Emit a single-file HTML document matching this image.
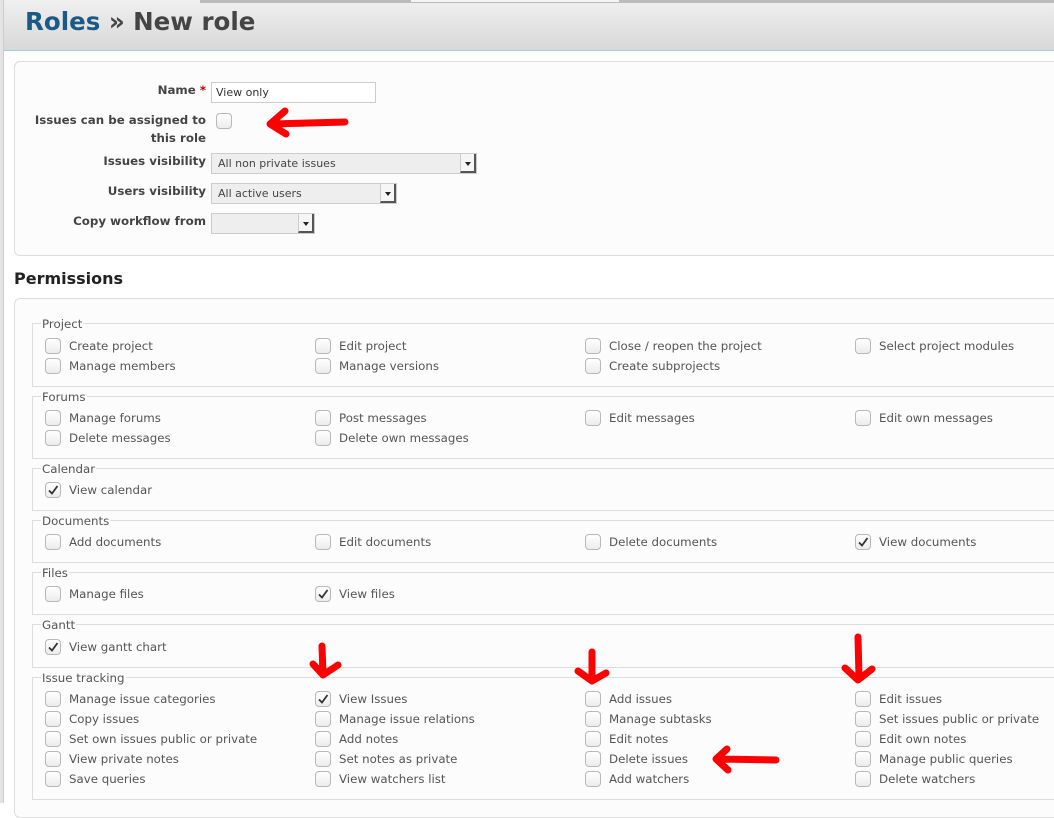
<!DOCTYPE html><html><head><style>
*{box-sizing:border-box}
body{margin:0;width:1054px;height:803px;overflow:hidden;background:#fff;font-family:"DejaVu Sans","Liberation Sans",sans-serif;font-size:11.8px;color:#555;position:relative}
.a{position:absolute;white-space:nowrap}
.cb{position:absolute;width:16px;height:16px;border:1px solid #b8b8b8;border-radius:4px;background:linear-gradient(#fff,#ececec)}
.lab{font-weight:bold;color:#444;text-align:right;width:200px}
.fs{position:absolute;left:32px;width:1040px;border:1px solid #ddd;border-right:none}
.lg{position:absolute;left:41px;background:#fcfcfc;padding:0 1px;color:#555}
.sel{position:absolute;height:21px;border:1px solid #ccc;background:#eee;font-size:11px;padding:3px 6px;color:#444}
.sel i{position:absolute;right:0;top:0;width:16px;height:19px;background:#f6f6f6;border-left:1px solid #ccc;border-right:2px solid #555;border-bottom:2px solid #555}
.sel i:after{content:"";position:absolute;left:4px;top:8px;border:3px solid transparent;border-top:4px solid #222}
</style></head><body>
<div class="a" style="left:0;top:0;width:4px;height:803px;background:#e4e4e4;border-right:1px solid #ccc"></div>
<div class="a" style="left:4px;top:0;width:1050px;height:51px;background:linear-gradient(#f0f0f0,#d8d8d8);border-bottom:1px solid #a9cbe0"></div>
<div class="a" style="left:200px;top:0;width:210px;height:3px;background:#bbb"></div>
<div class="a" style="left:410px;top:0;width:210px;height:3px;background:#f4f4f4;border:1px solid #bbb;border-top:none"></div>
<div class="a" style="left:620px;top:0;width:434px;height:3px;background:#bbb"></div>
<div class="a" style="left:25px;top:7px;font-size:24.5px;font-weight:bold;color:#444"><span style="color:#1b5a85">Roles</span> » New role</div>

<div class="a" style="left:14px;top:61px;width:1050px;height:195px;border:1px solid #ddd;border-radius:6px;background:#fcfcfc"></div>
<div class="a lab" style="left:6px;top:83px">Name <span style="color:#b00">*</span></div>
<div class="a" style="left:211px;top:82px;width:165px;height:21px;border:1px solid #ccc;background:#fff;font-size:11px;padding:3px 4px;color:#333">View only</div>
<div class="a lab" style="left:6px;top:111px;line-height:18px">Issues can be assigned to<br>this role</div>
<div class="cb" style="left:216px;top:113px"></div>
<div class="a lab" style="left:6px;top:154px">Issues visibility</div>
<div class="sel" style="left:211px;top:153px;width:266px">All non private issues<i></i></div>
<div class="a lab" style="left:6px;top:184px">Users visibility</div>
<div class="sel" style="left:211px;top:183px;width:186px">All active users<i></i></div>
<div class="a lab" style="left:6px;top:214px">Copy workflow from</div>
<div class="sel" style="left:211px;top:213px;width:104px"><i></i></div>

<div class="a" style="left:14px;top:269px;font-size:16px;font-weight:bold;color:#222">Permissions</div>
<div class="a" style="left:14px;top:298px;width:1050px;height:520px;border:1px solid #ddd;border-radius:6px;background:#fcfcfc"></div>

<div class="fs" style="top:323px;height:64px"></div><div class="lg a" style="top:317px">Project</div>
<div class="fs" style="top:396px;height:63px"></div><div class="lg a" style="top:390px">Forums</div>
<div class="fs" style="top:468px;height:43px"></div><div class="lg a" style="top:462px">Calendar</div>
<div class="fs" style="top:520px;height:43px"></div><div class="lg a" style="top:514px">Documents</div>
<div class="fs" style="top:572px;height:43px"></div><div class="lg a" style="top:566px">Files</div>
<div class="fs" style="top:624px;height:44px"></div><div class="lg a" style="top:618px">Gantt</div>
<div class="fs" style="top:677px;height:123px"></div><div class="lg a" style="top:671px">Issue tracking</div>

<div id="items"></div>
<script>
var rows=[
[346,["Create project","Edit project","Close / reopen the project","Select project modules"]],
[366,["Manage members","Manage versions","Create subprojects"]],
[418,["Manage forums","Post messages","Edit messages","Edit own messages"]],
[438,["Delete messages","Delete own messages"]],
[490,["*View calendar"]],
[542,["Add documents","Edit documents","Delete documents","*View documents"]],
[594,["Manage files","*View files"]],
[647,["*View gantt chart"]],
[699,["Manage issue categories","*View Issues","Add issues","Edit issues"]],
[719,["Copy issues","Manage issue relations","Manage subtasks","Set issues public or private"]],
[739,["Set own issues public or private","Add notes","Edit notes","Edit own notes"]],
[759,["View private notes","Set notes as private","Delete issues","Manage public queries"]],
[779,["Save queries","View watchers list","Add watchers","Delete watchers"]]];
var h="";
rows.forEach(function(r){r[1].forEach(function(t,i){var x=45+270*i,c=t[0]=="*";if(c)t=t.slice(1);
h+='<div class="cb" style="left:'+x+'px;top:'+(r[0]-8)+'px">'+(c?'<svg width="14" height="14" style="position:absolute;left:0;top:0"><path d="M3 7.5 L6 10.5 L11.5 3" stroke="#333" stroke-width="1.8" fill="none"/></svg>':'')+'</div>';
h+='<div class="a" style="left:'+(x+24)+'px;top:'+(r[0]-7)+'px">'+t+'</div>';});});
document.getElementById("items").innerHTML=h;
</script>

<svg class="a" style="left:0;top:0" width="1054" height="803">
<g stroke="#f00" stroke-width="7" stroke-linecap="round" stroke-linejoin="round" fill="none">
<path d="M345 122 L272 124 M285 111 L270 124 L286 134"/>
<path d="M322 646 L323 674 M313 664 L323 675 L338 665"/>
<path d="M592 652 L592 678 M578 671 L592 681 M592 681 L606 673"/>
<path d="M858 637 L859 677 M845 668 L858 680 L872 669"/>
<path d="M776 760 L717 759 M727 749 L716 759 L728 770"/>
</g></svg>
</body></html>
